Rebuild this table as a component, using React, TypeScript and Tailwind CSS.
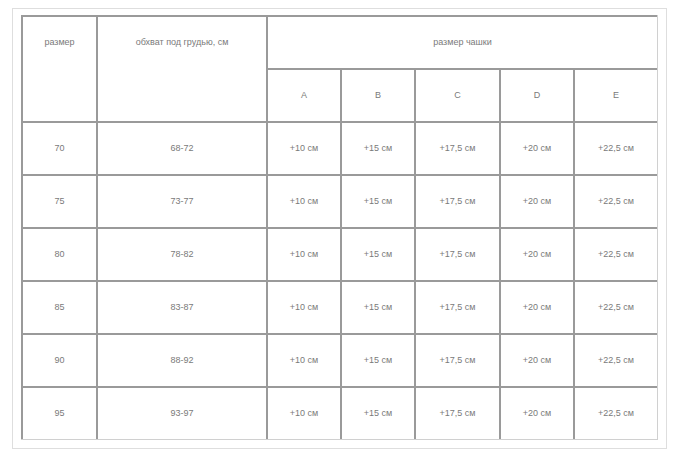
const rows = [
  ['70', '68-72'],
  ['75', '73-77'],
  ['80', '78-82'],
  ['85', '83-87'],
  ['90', '88-92'],
  ['95', '93-97'],
];

const cups = ['A', 'B', 'C', 'D', 'E'];
const adds = ['+10 см', '+15 см', '+17,5 см', '+20 см', '+22,5 см'];

const cell = 'border-l-2 border-t-2 border-[#9a9a9a] flex items-center justify-center';

const App = () => {
  return (
    <div className="min-h-screen bg-white pt-2 pl-3 font-['Liberation_Sans',Arial,sans-serif] text-[9px] text-[#7a7a7a]">
      <div className="w-[655px] border border-[#dedede] px-2 pt-[6px] pb-2">
        <div className="grid grid-cols-[75px_170px_74px_74px_85px_74px_84px] auto-rows-[53px] border-r border-b border-[#d0d0d0]">
          <div className="row-span-2 border-l-2 border-t-2 border-[#9a9a9a]">
            <div className="h-[51px] flex items-center justify-center">размер</div>
          </div>
          <div className="row-span-2 border-l-2 border-t-2 border-[#9a9a9a]">
            <div className="h-[51px] flex items-center justify-center">обхват под грудью, см</div>
          </div>
          <div className={`col-span-5 ${cell}`}>размер чашки</div>
          {cups.map((c) => (
            <div key={c} className={cell}>{c}</div>
          ))}
          {rows.map(([size, girth]) => (
            <>
              <div key={size} className={cell}>{size}</div>
              <div className={cell}>{girth}</div>
              {adds.map((a) => (
                <div key={a} className={cell}>{a}</div>
              ))}
            </>
          ))}
        </div>
      </div>
    </div>
  );
};

export default App;
